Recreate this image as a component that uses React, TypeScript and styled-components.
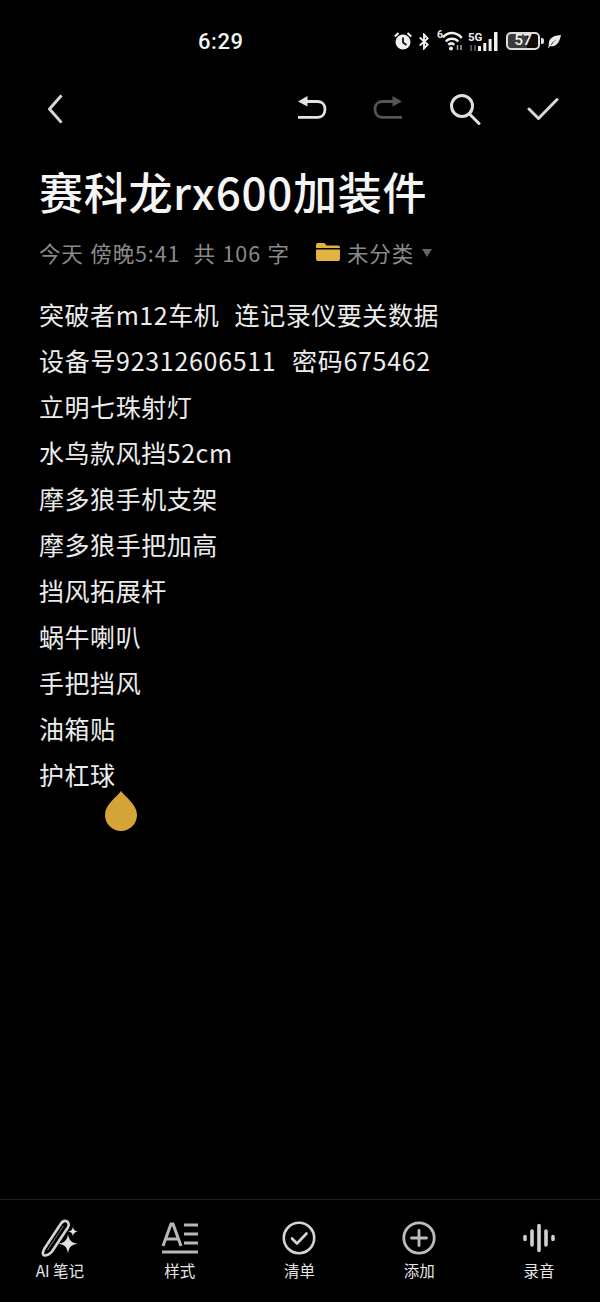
import React from "react";
import styled, { createGlobalStyle } from "styled-components";

const Global = createGlobalStyle`
  html, body { margin: 0; padding: 0; background: #000; }
  body { font-family: "Noto Sans CJK SC", "Noto Sans", sans-serif; }
  #root { height: 1302px; }
`;

const Page = styled.div`
  width: 600px;
  height: 1302px;
  background: #000;
  color: #fff;
  display: flex;
  flex-direction: column;
  overflow: hidden;
`;

const StatusBar = styled.div`
  height: 82px;
  display: flex;
  align-items: center;
  padding: 0 39px 0 198px;
  box-sizing: border-box;
`;

const Time = styled.div`
  font-family: "Roboto", sans-serif;
  font-size: 22px;
  font-weight: 500;
  letter-spacing: 0.6px;
  color: #f2f2f2;
  flex: 1;
`;

const StatusIcons = styled.div`
  display: flex;
  align-items: center;
`;

const AlarmIcon = styled.svg`
  display: block;
`;

const BluetoothIcon = styled.svg`
  display: block;
  margin-left: 7px;
`;

const Cluster5G = styled.div`
  width: 10px;
  height: 19px;
  display: flex;
  flex-direction: column;
  margin-left: 5px;
`;

const SmallLabel = styled.span`
  font-family: "Roboto", sans-serif;
  font-size: 11.5px;
  font-weight: 700;
  line-height: 10px;
  color: #eee;
  white-space: nowrap;
`;

const ArrowsIcon = styled.svg`
  display: block;
  margin-top: 3px;
`;

const WifiGroup = styled.div`
  position: relative;
  width: 26px;
  height: 20px;
  margin-left: 8px;
  display: flex;
  justify-content: flex-end;
`;

const WifiSix = styled.span`
  position: absolute;
  left: 0;
  top: -1px;
  font-family: "Roboto", sans-serif;
  font-size: 10.5px;
  font-weight: 700;
  line-height: 10px;
  color: #eee;
`;

const Battery = styled.div`
  width: 34px;
  height: 18px;
  box-sizing: border-box;
  border: 2px solid #dcdcdc;
  border-radius: 5px;
  margin-left: 8px;
  background: linear-gradient(to right, #3a3a3a 0 62%, #0a0a0a 62%);
  display: flex;
  align-items: center;
  justify-content: center;
  font-family: "Roboto", sans-serif;
  font-size: 15.5px;
  font-weight: 500;
  color: #f0f0f0;
  line-height: 1;
`;

const BatteryNub = styled.div`
  width: 2.5px;
  height: 6px;
  border-radius: 0 2px 2px 0;
  background: #ddd;
  margin: 0 4.5px 0 1px;
`;

const Toolbar = styled.div`
  height: 54px;
  display: flex;
  align-items: center;
  padding: 0 41px 0 46px;
  box-sizing: border-box;
`;

const ToolRight = styled.div`
  margin-left: auto;
  display: flex;
  align-items: center;
  gap: 46px;
`;

const Title = styled.h1`
  margin: 23px 0 0;
  padding: 0 39px;
  font-size: 44px;
  font-weight: 500;
  letter-spacing: 0.7px;
  line-height: 64px;
  color: #f5f5f5;
  white-space: nowrap;
`;

const Meta = styled.div`
  margin-top: 13px;
  padding: 0 39px;
  height: 32px;
  display: flex;
  align-items: center;
  font-size: 21.5px;
  letter-spacing: 0.85px;
  word-spacing: 1px;
  color: #8a8a8a;
  white-space: pre;
`;

const Folder = styled.span`
  display: inline-flex;
  align-items: center;
  margin-left: 26px;
  margin-right: 7px;
`;

const Caret = styled.span`
  width: 0;
  height: 0;
  margin-left: 8px;
  margin-top: 2px;
  border-left: 5.5px solid transparent;
  border-right: 5.5px solid transparent;
  border-top: 8px solid #666;
`;

const Body = styled.div`
  margin-top: 23px;
  padding: 0 39px;
  flex: 1;
`;

const Line = styled.div<{ $wide?: boolean }>`
  position: relative;
  height: 46px;
  line-height: 46px;
  font-size: 25px;
  letter-spacing: ${(p) => (p.$wide ? "0.7px" : "0.55px")};
  word-spacing: 1.5px;
  color: #ececec;
  white-space: pre;
`;

const Handle = styled.svg`
  position: absolute;
  left: 66px;
  top: 40px;
`;

const BottomBar = styled.nav`
  height: 103px;
  border-top: 1px solid #1c1c1c;
  display: grid;
  grid-template-columns: repeat(5, 1fr);
  padding: 0 1px 0 0;
  box-sizing: border-box;
`;

const Tab = styled.div`
  display: flex;
  flex-direction: column;
  align-items: center;
  padding-top: 19px;
`;

const TabIcon = styled.div`
  height: 38px;
  display: flex;
  align-items: center;
  justify-content: center;
`;

const TabLabel = styled.div`
  margin-top: 3px;
  font-size: 15.5px;
  line-height: 20px;
  color: #e6e6e6;
  white-space: nowrap;
`;

const lines = [
  "突破者m12车机  连记录仪要关数据",
  "设备号92312606511  密码675462",
  "立明七珠射灯",
  "水鸟款风挡52cm",
  "摩多狼手机支架",
  "摩多狼手把加高",
  "挡风拓展杆",
  "蜗牛喇叭",
  "手把挡风",
  "油箱贴",
  "护杠球",
];

const ic = "#d4d4d4";

const tabs = [
  {
    label: "AI 笔记",
    icon: (
      <svg width="38" height="38" viewBox="0 0 38 38" fill="none">
        <path d="M2.500 36c-.6-.6-.6-2.500-.3-3.500.3-1.200 1-2.500 1.800-3.700L20 4.500c1.600-2.400 4.200-3.200 6-2 1.900 1.200 2.200 3.800.7 6.200L11 32.500c-1 1.200-2.200 2.300-3.700 3-1.600.7-4 1.300-4.800.5z" stroke={ic} strokeWidth="2.700" strokeLinejoin="round" />
        <path d="M6.500 31 22.500 7" stroke="#777" strokeWidth="1" />
        <path d="M27 15c.9 6.300 3.400 8.800 9.500 9.700-6.100.9-8.600 3.400-9.500 9.700-.9-6.300-3.400-8.800-9.500-9.700 6.100-.9 8.600-3.400 9.500-9.700z" fill="#e0e0e0" />
        <path d="M32 7.500c.5 3.300 1.700 4.500 5 5-3.300.5-4.500 1.700-5 5-.5-3.300-1.700-4.500-5-5 3.300-.5 4.500-1.700 5-5z" fill="#e0e0e0" />
      </svg>
    ),
  },
  {
    label: "样式",
    icon: (
      <svg width="38" height="34" viewBox="0 0 38 34" fill="none" stroke="#b8b8b8" strokeWidth="3">
        <path d="M2 25 10 3h2l8 22M5 18h12" />
        <path d="M23 4h14M23 13h14M23 22h14M1 31h36" />
      </svg>
    ),
  },
  {
    label: "清单",
    icon: (
      <svg width="34" height="34" viewBox="0 0 34 34" fill="none" stroke={ic} strokeWidth="2.600">
        <circle cx="17" cy="17" r="15.200" />
        <path d="m10 17.500 5 5 9.500-10" strokeLinecap="round" strokeLinejoin="round" />
      </svg>
    ),
  },
  {
    label: "添加",
    icon: (
      <svg width="34" height="34" viewBox="0 0 34 34" fill="none" stroke="#bdbdbd" strokeWidth="2.800">
        <circle cx="17" cy="17" r="15.200" />
        <path d="M17 9.500v15M9.500 17h15" strokeLinecap="round" />
      </svg>
    ),
  },
  {
    label: "录音",
    icon: (
      <svg width="34" height="32" viewBox="0 0 34 32" fill="none" stroke="#d0d0d0" strokeLinecap="round" strokeWidth="3.600">
        <path d="M3 14.500v3M10 9v14M17 3.500v25M24 9v14M31 14.500v3" />
      </svg>
    ),
  },
];

export default function App() {
  return (
    <Page>
      <Global />
      <StatusBar>
        <Time>6:29</Time>
        <StatusIcons>
          <AlarmIcon width="18" height="18" viewBox="0 0 18 18">
            <circle cx="9" cy="10" r="7.500" fill="#f0f0f0" />
            <path d="M9 5.500V10.500l3.500 2.500" stroke="#111" strokeWidth="1.800" fill="none" />
            <path d="M.8 4.500 4.500 1M17.200 4.500 13.500 1" stroke="#f0f0f0" strokeWidth="2.200" />
          </AlarmIcon>
          <BluetoothIcon width="10" height="17" viewBox="0 0 10 17" fill="none" stroke="#f0f0f0" strokeWidth="1.900">
            <path d="m.7 4.500 8 7-3.700 4V1.500l3.700 4-8 7" />
          </BluetoothIcon>
          <WifiGroup>
            <WifiSix>6</WifiSix>
            <svg width="21" height="20" viewBox="0 0 21 20" fill="none" stroke="#f0f0f0" strokeWidth="2.500">
              <path d="M.8 6.500c4.800-6 13.600-6 19 .5M3.800 10.500c3.300-3.800 9-3.800 12.500 0M6.300 13.800c1.800-1.600 4.300-1.600 6 0" />
              <circle cx="9" cy="17.500" r="2" fill="#f0f0f0" stroke="none" />
              <path d="M15.500 14v5M19 14v5" stroke="#aaa" strokeWidth="1.500" />
            </svg>
          </WifiGroup>
          <Cluster5G>
            <SmallLabel>5G</SmallLabel>
            <ArrowsIcon width="10" height="6" viewBox="0 0 10 6" fill="none" stroke="#666" strokeWidth="1.500">
              <path d="M3 0v6M7 0v6" />
            </ArrowsIcon>
          </Cluster5G>
          <svg width="20" height="19" viewBox="0 0 20 19" fill="#f2f2f2">
            <rect x="0" y="14" width="3" height="5" rx=".5" />
            <rect x="5.300" y="11" width="3" height="8" rx=".5" />
            <rect x="10.600" y="7" width="3" height="12" rx=".5" />
            <rect x="16" y="0" width="3.500" height="19" rx=".5" />
          </svg>
          <Battery>57</Battery>
          <BatteryNub />
          <svg width="13" height="13" viewBox="0 0 13 13" fill="#ececec">
            <path d="M13 0C6 .5 1.500 2.500.8 8c-.2 1.500 0 3 0 3L0 12.500l.8.500 1-1.800c5 .8 9.500-2 11.200-11.200zM3 9.500c1.500-2.500 3.500-4 6-5.500-2.300 2-4 3.500-5.500 6z" />
          </svg>
        </StatusIcons>
      </StatusBar>

      <Toolbar>
        <svg width="18" height="30" viewBox="0 0 18 30" fill="none" stroke="#d8d8d8" strokeWidth="3" strokeLinecap="square" strokeLinejoin="round">
          <path d="M14.500 2.500 3.500 15l11 12.500" />
        </svg>
        <ToolRight>
          <svg width="30" height="26" viewBox="0 0 30 26" fill="none" stroke="#e4e4e4" strokeWidth="2.800">
            <path d="M6 5.500h15c4 0 7 3 7 7.800s-3 8-7 8H1" />
            <path d="M1 5.500 10.500 0v10.500z" fill="#e4e4e4" stroke="none" />
          </svg>
          <svg width="30" height="26" viewBox="0 0 30 26" fill="none" stroke="#555" strokeWidth="2.800">
            <path d="M24 5.500H9c-4 0-7 3-7 7.800s3 8 7 8h20" />
            <path d="M29 5.500 19.500 0v10.500z" fill="#555" stroke="none" />
          </svg>
          <svg width="32" height="32" viewBox="0 0 32 32" fill="none" stroke="#e0e0e0" strokeWidth="3">
            <circle cx="13" cy="13" r="10.500" />
            <path d="m20.500 21 9.500 9.500" strokeLinecap="round" />
          </svg>
          <svg width="32" height="24" viewBox="0 0 32 24" fill="none" stroke="#d8d8d8" strokeWidth="3" strokeLinecap="round" strokeLinejoin="round">
            <path d="m2 12 9.500 9.500L30 2.500" />
          </svg>
        </ToolRight>
      </Toolbar>

      <Title>赛科龙rx600加装件</Title>

      <Meta>
        今天 傍晚5:41  共 106 字
        <Folder>
          <svg width="24" height="20" viewBox="0 0 24 20">
            <path d="M0 3a2 2 0 0 1 2-2h6.500l2 2.500H22a2 2 0 0 1 2 2V6H0z" fill="#e2b33f" />
            <path d="M0 7.500h24V17a2 2 0 0 1-2 2H2a2 2 0 0 1-2-2z" fill="#e2b33f" />
          </svg>
        </Folder>
        未分类
        <Caret />
      </Meta>

      <Body>
        {lines.map((l, i) => (
          <Line key={i} $wide={i === 1}>
            {l}
            {i === lines.length - 1 && (
              <Handle width="32" height="40" viewBox="0 0 32 40">
                <path d="M16 0c4 6 16 13 16 24a16 16 0 0 1-32 0C0 13 12 6 16 0z" fill="#d4a437" />
              </Handle>
            )}
          </Line>
        ))}
      </Body>

      <BottomBar>
        {tabs.map((t) => (
          <Tab key={t.label}>
            <TabIcon>{t.icon}</TabIcon>
            <TabLabel>{t.label}</TabLabel>
          </Tab>
        ))}
      </BottomBar>
    </Page>
  );
}
